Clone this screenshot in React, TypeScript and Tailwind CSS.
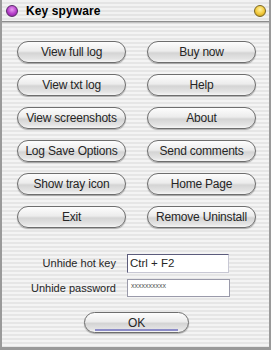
import React from "react";

const stripes =
  "bg-[repeating-linear-gradient(180deg,#f4f4f4_0px,#f4f4f4_2px,#e6e6e6_2px,#e6e6e6_4px)]";

function AquaButton({ label, wide }: { label: string; wide?: boolean }) {
  return (
    <button
      className={`relative flex items-center justify-center rounded-full border border-[#6e6e6e] bg-[linear-gradient(180deg,#fdfdfd_0%,#ececec_45%,#d4d4d4_55%,#e4e4e4_85%,#f6f6f6_100%)] shadow-[0_1px_1px_rgba(0,0,0,0.3)] text-[12px] leading-none text-[#262626] tracking-[-0.2px] ${
        wide ? "w-[105px] h-[21px]" : "w-[109px] h-[22px]"
      }`}
    >
      {label}
      {wide && (
        <span className="absolute bottom-[1px] left-[10px] right-[10px] h-[2px] bg-[#8c8cc8]" />
      )}
    </button>
  );
}

const rows: [string, string][] = [
  ["View full log", "Buy now"],
  ["View txt log", "Help"],
  ["View screenshots", "About"],
  ["Log Save Options", "Send comments"],
  ["Show tray icon", "Home Page"],
  ["Exit", "Remove Uninstall"],
];

export default function App() {
  return (
    <div
      className={`w-[271px] h-[350px] flex flex-col overflow-hidden border-x-[2px] border-b-[3px] border-[#9a9a9a] ${stripes}`}
      style={{ fontFamily: '"Liberation Sans", Arial, sans-serif' }}
    >
      {/* Title bar */}
      <div className="h-[22px] shrink-0 flex items-center justify-between pl-[4px] pr-[3px] bg-[repeating-linear-gradient(180deg,#f2f2f2_0px,#f2f2f2_2px,#e4e4e4_2px,#e4e4e4_4px)] border-b border-[#8e8e8e] shadow-[0_1px_1px_rgba(0,0,0,0.15)]">
        <div className="flex items-center gap-[8px]">
          <span className="w-[12px] h-[12px] rounded-full border border-[#5a2a6a] bg-[radial-gradient(circle_at_50%_35%,#e89ef2_0%,#b43cc8_55%,#7a1a8c_100%)]" />
          <span className="text-[12px] font-bold text-black tracking-[0.1px]">Key spyware</span>
        </div>
        <span className="w-[12px] h-[12px] rounded-full border border-[#7a6620] bg-[radial-gradient(circle_at_50%_35%,#fff2a0_0%,#f2c83a_55%,#b08a18_100%)]" />
      </div>

      {/* Buttons */}
      <div className="mt-[19px] ml-[15px] grid grid-cols-[109px_109px] gap-x-[21px] gap-y-[11px]">
        {rows.map(([a, b]) => (
          <React.Fragment key={a}>
            <AquaButton label={a} />
            <AquaButton label={b} />
          </React.Fragment>
        ))}
      </div>

      {/* Unhide settings */}
      <div className="mt-[26px] flex flex-col gap-[6px] text-[11px] text-[#262626]">
        <div className="flex items-center">
          <span className="w-[114px] text-right">Unhide hot key</span>
          <div className="ml-[11px] w-[102px] h-[19px] bg-white border border-[#c8c8d4] border-t-[#5c5c7c] border-l-[#5c5c7c] flex items-center px-[2px] text-[11.5px]">
            Ctrl + F2
          </div>
        </div>
        <div className="flex items-center">
          <span className="w-[114px] text-right">Unhide password</span>
          <div className="ml-[11px] w-[103px] h-[18px] bg-white border border-[#9a9aaa] px-[3px] pt-[1px] text-[7px] leading-[10px] text-[#555]">
            xxxxxxxxxx
          </div>
        </div>
      </div>

      <div className="mt-[15px] ml-[82px]">
        <AquaButton label="OK" wide />
      </div>
    </div>
  );
}
